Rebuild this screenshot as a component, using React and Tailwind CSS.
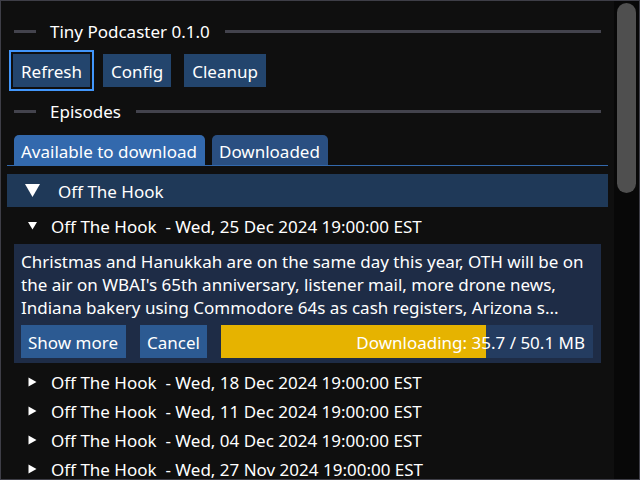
import React from "react";

const FONT = { fontFamily: '"Noto Sans", "Open Sans", sans-serif' };

const SeparatorText = ({ label, className = "" }) => (
  <div className={`flex items-center h-[23px] ${className}`}>
    <div className="w-[22px] h-[3px] bg-[#43434d]" />
    <span className="ml-[14px] mr-[15px] whitespace-nowrap">{label}</span>
    <div className="flex-1 h-[3px] bg-[#43434d]" />
  </div>
);

const TriDown = ({ big }) =>
  big ? (
    <svg width="15" height="14" viewBox="0 0 15 14">
      <polygon points="0,0 15,0 7.5,13" fill="#ffffff" />
    </svg>
  ) : (
    <svg width="9" height="9" viewBox="0 0 9 9">
      <polygon points="0,1 9,1 4.5,8.5" fill="#ffffff" />
    </svg>
  );

const TriRight = () => (
  <svg width="9" height="10" viewBox="0 0 9 10">
    <polygon points="0.5,0.5 8.5,5 0.5,9.5" fill="#ffffff" />
  </svg>
);

const TreeRow = ({ date, open, className = "" }) => (
  <div className={`flex items-center h-[23px] shrink-0 ${className}`}>
    <div className="w-[37px] pl-[14px] flex items-center">
      {open ? <TriDown /> : <TriRight />}
    </div>
    <span className="relative top-[1px] whitespace-pre">{`Off The Hook  - Wed, ${date} 2024 19:00:00 EST`}</span>
  </div>
);

const older = ["18 Dec", "11 Dec", "04 Dec", "27 Nov"];

export default function App() {
  const progress = 35.7 / 50.1;

  return (
    <div
      className="w-[640px] h-[480px] bg-[#0f0f0f] border border-[#3e3e47] flex overflow-hidden text-white text-[17px] leading-[23px]"
      style={FONT}
    >
      <div className="flex-1 flex flex-col px-[13px] pt-[19px] overflow-hidden">
        <SeparatorText label="Tiny Podcaster 0.1.0" />

        <div className="flex gap-[13px] mt-[11px] shrink-0">
          <button className="h-[33px] px-[8px] pt-[2px] bg-[#23456d] outline-2 outline-[#4296fa] outline-offset-[2px] ml-[-1px]">
            Refresh
          </button>
          <button className="h-[33px] px-[8px] pt-[2px] bg-[#23456d]">Config</button>
          <button className="h-[33px] px-[8px] pt-[2px] bg-[#23456d]">Cleanup</button>
        </div>

        <SeparatorText label="Episodes" className="mt-[13px] shrink-0" />

        <div className="flex gap-[7px] mt-[12px] shrink-0">
          <div className="h-[30px] pl-[7px] pr-[8px] pt-[2px] flex items-center rounded-t-[5px] bg-[#3369ad]">
            Available to download
          </div>
          <div className="h-[30px] pl-[7px] pr-[8px] pt-[2px] flex items-center rounded-t-[5px] bg-[#2a4f81]">
            Downloaded
          </div>
        </div>
        <div className="-mx-[7px] h-[1px] bg-[#3369ad] shrink-0" />

        <div className="-mx-[7px] mt-[8px] h-[33px] bg-[#1f3958] flex items-center shrink-0">
          <div className="w-[51px] pl-[18px] flex items-center">
            <TriDown big />
          </div>
          <span className="relative top-[1px]">Off The Hook</span>
        </div>

        <TreeRow date="25 Dec" open className="mt-[7px]" />

        <div className="mt-[7px] bg-[#1e2c46] pt-[6px] pb-[5px] pl-[7px] pr-[8px] shrink-0">
          <p className="whitespace-nowrap">
            Christmas and Hanukkah are on the same day this year, OTH will be on
          </p>
          <p className="whitespace-nowrap">
            the air on WBAI's 65th anniversary, listener mail, more drone news,
          </p>
          <p className="whitespace-nowrap">
            Indiana bakery using Commodore 64s as cash registers, Arizona s...
          </p>
          <div className="flex gap-[14px] mt-[6px]">
            <button className="h-[33px] pl-[7px] pr-[8px] pt-[2px] bg-[#2c5a92]">Show more</button>
            <button className="h-[33px] px-[7px] pt-[2px] bg-[#2c5a92]">Cancel</button>
            <div className="relative flex-1 h-[33px] bg-[#243c60]">
              <div
                className="absolute left-0 top-0 h-full bg-[#e6b300]"
                style={{ width: `${progress * 100}%` }}
              />
              <div className="absolute inset-0 flex items-center justify-end pr-[8px] pt-[2px] whitespace-nowrap">
                Downloading: 35.7 / 50.1 MB
              </div>
            </div>
          </div>
        </div>

        <div className="flex flex-col gap-[6px] mt-[7px]">
          {older.map((d) => (
            <TreeRow key={d} date={d} />
          ))}
        </div>
      </div>

      <div className="w-[25px] bg-[#080808] pt-[2px] px-[3px] shrink-0">
        <div className="h-[190px] rounded-full bg-[#4f4f4f]" />
      </div>
    </div>
  );
}
